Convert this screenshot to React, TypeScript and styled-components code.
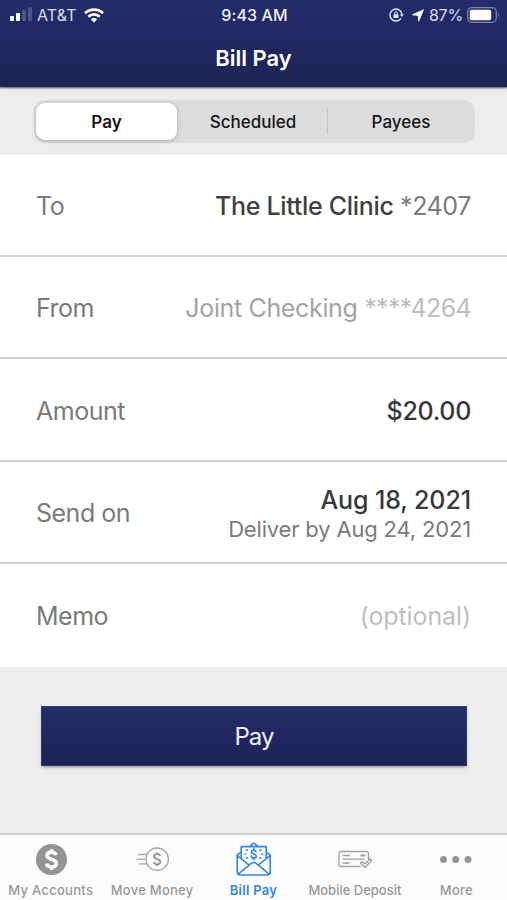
import React from "react";
import styled, { createGlobalStyle } from "styled-components";

const GlobalStyle = createGlobalStyle`
  * { box-sizing: border-box; }
  body { margin: 0; font-family: Inter, "Liberation Sans", sans-serif; background: #ededed; }
  button { font: inherit; border: 0; padding: 0; background: none; color: inherit; }
`;

const Screen = styled.div`
  width: 507px;
  height: 900px;
  display: flex;
  flex-direction: column;
  background: #ededed;
  overflow: hidden;
  white-space: nowrap;
`;

const Header = styled.header`
  height: 87px;
  flex: none;
  color: #fff;
  background: linear-gradient(#232d69, #232763 45%, #1d2453);
  box-shadow: 0 1px 2px rgba(20, 22, 60, 0.75);
`;

const StatusBar = styled.div`
  height: 30px;
  padding: 0 7px 0 9px;
  display: grid;
  grid-template-columns: 1fr auto 1fr;
  align-items: center;
  font-size: 16px;
`;

const StatusGroup = styled.div<{ $end?: boolean }>`
  display: flex;
  align-items: center;
  justify-content: ${(p) => (p.$end ? "flex-end" : "flex-start")};
  color: #d9dcef;
  svg { flex: none; display: block; }
`;

const Carrier = styled.span`
  margin: 0 7px 0 4px;
  font-size: 16px;
  letter-spacing: 0.1px;
`;

const Clock = styled.span`
  font-size: 16px;
  font-weight: 500;
  letter-spacing: 0.1px;
  color: #eef0fb;
`;

const Indicators = styled.div`
  display: flex;
  align-items: center;
  gap: 8px;
`;

const Percent = styled.span`
  margin: 0 4px 0 5px;
  font-size: 16px;
  letter-spacing: -0.2px;
`;

const Title = styled.h1`
  margin: 0;
  height: 56px;
  line-height: 56px;
  text-align: center;
  font-size: 22px;
  font-weight: 600;
  letter-spacing: 0;
`;

const TabStrip = styled.div`
  height: 68px;
  flex: none;
  padding: 13px 32px 0 34px;
`;

const Segments = styled.div`
  height: 43px;
  padding: 3px 0 3px 2px;
  display: grid;
  grid-template-columns: 141px 1fr 148px;
  border-radius: 11px;
  background: #dcdcdc;
`;

const Segment = styled.button<{ $active?: boolean; $divided?: boolean }>`
  display: flex;
  align-items: center;
  justify-content: center;
  position: relative;
  font-size: 17px;
  font-weight: ${(p) => (p.$active ? 600 : 500)};
  color: #161616;
  border-radius: 9px;
  background: ${(p) => (p.$active ? "#fff" : "transparent")};
  box-shadow: ${(p) => (p.$active ? "0 1px 4px rgba(0,0,0,.22)" : "none")};
  &:nth-child(2) { padding-left: 2px; }
  &::before {
    content: "";
    display: ${(p) => (p.$divided ? "block" : "none")};
    position: absolute;
    left: 0;
    top: 6px;
    width: 1px;
    height: 25px;
    background: #c3c3c3;
  }
`;

const Form = styled.main`
  height: 512px;
  flex: none;
  display: grid;
  grid-template-rows: 102px 102px 103px 102px 103px;
  background: #fff;
`;

const Row = styled.div`
  padding: 2px 36px 0 36px;
  display: flex;
  align-items: center;
  justify-content: space-between;
  font-size: 25px;
  color: #7b7b7b;
  &:not(:last-child) { border-bottom: 2px solid #d2d2d2; }
  &:last-child { padding-top: 0; }
`;

const Values = styled.div`
  display: flex;
  flex-direction: column;
  align-items: flex-end;
  padding-top: 2px;
`;

const Text = styled.span<{ $size?: number; $track?: number; $tone?: string; $weight?: number; $line?: number }>`
  font-size: ${(p) => p.$size ?? 25}px;
  line-height: ${(p) => p.$line ?? 30}px;
  letter-spacing: ${(p) => p.$track ?? 0}px;
  color: ${(p) => p.$tone ?? "#7b7b7b"};
  font-weight: ${(p) => p.$weight ?? 400};
`;

const Label = styled(Text)`
  letter-spacing: -0.5px;
`;

const PayArea = styled.div`
  flex: 1;
  padding: 40px 41px 0 42px;
`;

const PayButton = styled.button`
  width: 100%;
  height: 58px;
  display: flex;
  align-items: center;
  justify-content: center;
  font-size: 24px;
  letter-spacing: -0.9px;
  color: #eef0ff;
  background: linear-gradient(#212e64, #222762 40%, #1d2355);
  box-shadow: 0 0 0 1px #343b70, 0 2px 3px rgba(0, 0, 0, 0.45);
`;

const TabBar = styled.nav`
  height: 67px;
  flex: none;
  display: grid;
  grid-template-columns: repeat(5, 1fr);
  border-top: 2px solid #cfcfcf;
  background: #fcfcfc;
`;

const Tab = styled.button<{ $active?: boolean; $track?: number }>`
  display: flex;
  flex-direction: column;
  align-items: center;
  color: ${(p) => (p.$active ? "#2f86ee" : "#999")};
  font-size: 13px;
  line-height: 16px;
  font-weight: ${(p) => (p.$active ? 600 : 500)};
  letter-spacing: ${(p) => p.$track ?? 0}px;
  svg { display: block; margin: 5px 0 8px; overflow: visible; }
`;

const Signal = () => (
  <svg width="24" height="16" viewBox="0 0 24 16" fill="#fff">
    <rect x="1" y="9" width="4" height="5" rx="1" />
    <rect x="7" y="6" width="4" height="8" rx="1" />
    <rect x="13" y="3" width="4" height="11" rx="1" opacity=".2" />
    <rect x="19" y="0" width="4" height="14" rx="1" opacity=".2" />
  </svg>
);

const Wifi = () => (
  <svg width="20" height="15" viewBox="0 0 20 15" fill="none" stroke="#fff" strokeWidth="2.7">
    <path d="M1 5.3C6 .4 14 .4 19 5.3" />
    <path d="M4.3 8.7C7.6 5.6 12.4 5.6 15.7 8.7" />
    <path d="M10 14.5 6.8 11.3C8.6 9.6 11.4 9.6 13.2 11.3Z" fill="#fff" stroke="none" />
  </svg>
);

const RotationLock = () => (
  <svg width="15" height="14" viewBox="0 0 15 14" fill="none" stroke="#e4e6f5" strokeWidth="1.4">
    <path d="M12 10.3A6 6 0 1 1 12.9 6" />
    <path d="M10.9 6.2h4l-2 2.9z" fill="#e4e6f5" stroke="none" />
    <rect x="4.5" y="6.2" width="4.9" height="3.8" rx=".5" fill="#e4e6f5" stroke="none" />
    <path d="M5.6 6.5V5.2a1.4 1.4 0 0 1 2.8 0v1.3" strokeWidth="1" />
  </svg>
);

const Location = () => (
  <svg width="12" height="13" viewBox="0 0 12 13" fill="#fff">
    <path d="M11.5.7 6.7 12.2 6.1 6.5.4 5.8Z" stroke="#fff" strokeWidth=".8" strokeLinejoin="round" />
  </svg>
);

const Battery = () => (
  <svg width="33" height="16" viewBox="0 0 33 16">
    <rect x=".7" y=".7" width="28.6" height="14.6" rx="4.2" fill="none" stroke="#8085ac" strokeWidth="1.2" />
    <rect x="2.7" y="2.7" width="21.5" height="10.6" rx="2" fill="#fff" />
    <path d="M31 5.5q1.7 2.5 0 5z" fill="#8085ac" />
  </svg>
);

const DOLLAR = "M4 -4C3.3 -6 1.8 -6.4 0 -6.4C-2.4 -6.4 -4 -5.2 -4 -3.4C-4 .8 4.2 -.9 4.2 3.4C4.2 5.4 2.4 6.5 0 6.5C-2.3 6.5 -4 5.5 -4.3 3.5M0 -9V-6M0 6V9";

const AccountsIcon = () => (
  <svg width="32" height="34" viewBox="0 0 32 34">
    <circle cx="16.5" cy="19.5" r="15.5" fill="#949494" />
    <path d={DOLLAR} transform="translate(16.5 19.5) scale(1.14)" fill="none" stroke="#fff" strokeWidth="3" />
  </svg>
);

const MoveIcon = () => (
  <svg width="34" height="34" viewBox="0 0 34 34" fill="none" stroke="#a8a8a8">
    <circle cx="22.2" cy="19.2" r="11.2" strokeWidth="1.3" />
    <path d="M3 14.5H12M1.5 19.2H11M4 23.8H12" strokeWidth="1.3" />
    <path d={DOLLAR} transform="translate(22.2 19.2) scale(.78)" stroke="#909090" strokeWidth="2.2" />
  </svg>
);

const BillIcon = () => (
  <svg width="36" height="34" viewBox="0 0 36 34" fill="none" stroke="#2f86ee" strokeWidth="1.6" strokeLinejoin="round" strokeLinecap="round">
    <g transform="translate(.7 1.8)">
      <path d="M5 10.5 1.5 13V30Q1.5 33.2 4.7 33.2H31.3Q34.5 33.2 34.5 30V13L31 10.5" />
      <path d="M14 4.5 17 1.8Q18 1 19 1.8L22 4.5M5.5 16V4.8H30.5V16" />
      <path d="M1.8 14 13.5 23.3M34.2 14 22.5 23.3M2.8 32 15.5 21.5Q18 19.8 20.5 21.5L33.2 32" />
      <path d={DOLLAR} transform="translate(18 12.3) scale(.6)" strokeWidth="2.8" />
      <path d="M10.5 8.5H12M9 12.3H10.3M10.5 16.2H12M24 8.5H25.5M25.7 12.3H27M24 16.2H25.5" strokeWidth="1.4" />
    </g>
  </svg>
);

const DepositIcon = () => (
  <svg width="36" height="34" viewBox="0 0 36 34" fill="none" stroke="#a0a0a0" strokeWidth="1.3" strokeLinejoin="round">
    <path d="M31.5 20V13.5Q31.5 11.5 29.5 11.5H4Q2 11.5 2 13.5V24.5Q2 26.5 4 26.5H23.5" />
    <path d="M5.5 15.5H13M5.5 19.2H28M5.5 23H12.5" />
    <path d="M23.5 15.5H28.5" strokeWidth="2" />
    <path d="M23.5 23.3 25.2 21.7 28 24 33 18.8 34.7 20.4 28 27.5Z" fill="#fcfcfc" />
  </svg>
);

const MoreIcon = () => (
  <svg width="34" height="34" viewBox="0 0 34 34" fill="#949494">
    <circle cx="4.5" cy="19.6" r="3.5" />
    <circle cx="16.7" cy="19.6" r="3.5" />
    <circle cx="29" cy="19.6" r="3.5" />
  </svg>
);

export default function App() {
  return (
    <Screen>
      <GlobalStyle />
      <Header>
        <StatusBar>
          <StatusGroup>
            <Signal />
            <Carrier>AT&amp;T</Carrier>
            <Wifi />
          </StatusGroup>
          <Clock>9:43 AM</Clock>
          <StatusGroup $end>
            <Indicators>
              <RotationLock />
              <Location />
            </Indicators>
            <Percent>87%</Percent>
            <Battery />
          </StatusGroup>
        </StatusBar>
        <Title>Bill Pay</Title>
      </Header>
      <TabStrip>
        <Segments>
          <Segment $active>Pay</Segment>
          <Segment>Scheduled</Segment>
          <Segment $divided>Payees</Segment>
        </Segments>
      </TabStrip>
      <Form>
        <Row>
          <Label>To</Label>
          <Text $weight={500} $tone="#404040" $track={-0.3}>
            The Little Clinic <Text $track={-0.4}>*2407</Text>
          </Text>
        </Row>
        <Row>
          <Label>From</Label>
          <Text $tone="#a3a3a3" $track={-0.35}>
            Joint Checking <Text $tone="#bdbdbd" $track={-0.65}>****4264</Text>
          </Text>
        </Row>
        <Row>
          <Label>Amount</Label>
          <Text $weight={500} $tone="#383838" $track={-0.3}>$20.00</Text>
        </Row>
        <Row>
          <Label>Send on</Label>
          <Values>
            <Text $weight={500} $tone="#383838" $track={-0.1}>Aug 18, 2021</Text>
            <Text $size={22} $line={29} $track={-0.17}>Deliver by Aug 24, 2021</Text>
          </Values>
        </Row>
        <Row>
          <Label>Memo</Label>
          <Text $tone="#bfbfbf" $track={-0.1}>(optional)</Text>
        </Row>
      </Form>
      <PayArea>
        <PayButton>Pay</PayButton>
      </PayArea>
      <TabBar>
        <Tab $track={0.3}><AccountsIcon />My Accounts</Tab>
        <Tab $track={0.25}><MoveIcon />Move Money</Tab>
        <Tab $active $track={0.3}><BillIcon />Bill Pay</Tab>
        <Tab><DepositIcon />Mobile Deposit</Tab>
        <Tab $track={0.2}><MoreIcon />More</Tab>
      </TabBar>
    </Screen>
  );
}
